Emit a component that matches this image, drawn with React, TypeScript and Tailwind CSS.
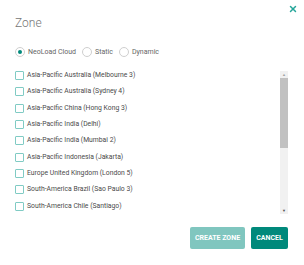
import { X } from 'lucide-react';

const zones = [
  'Asia-Pacific Australia (Melbourne 3)',
  'Asia-Pacific Australia (Sydney 4)',
  'Asia-Pacific China (Hong Kong 3)',
  'Asia-Pacific India (Delhi)',
  'Asia-Pacific India (Mumbai 2)',
  'Asia-Pacific Indonesia (Jakarta)',
  'Europe United Kingdom (London 5)',
  'South-America Brazil (Sao Paulo 3)',
  'South-America Chile (Santiago)',
];

function Radio({ label, checked }: { label: string; checked?: boolean }) {
  return (
    <label className="flex items-center gap-[3px]">
      <span className="flex h-[10px] w-[10px] items-center justify-center rounded-full border border-[#cfcfcf]">
        {checked && <span className="h-[4px] w-[4px] rounded-full bg-[#00897b]" />}
      </span>
      <span>{label}</span>
    </label>
  );
}

export default function App() {
  return (
    <div
      className="relative h-[265px] w-[304px] bg-white text-[#555]"
      style={{ fontFamily: 'Roboto, "Liberation Sans", sans-serif' }}
    >
      <button className="absolute right-[6px] top-[3.5px] text-[#26a69a]">
        <X size={10} strokeWidth={3.5} />
      </button>

      <div className="flex h-full flex-col pl-[15px] pr-[16px] pt-[15px]">
        <h2 className="h-[16px] text-[12px] font-light leading-[16px] text-[#757575]">Zone</h2>

        <div className="mt-[16px] flex h-[10px] items-center gap-[6px] text-[7px] leading-[10px] text-[#666]">
          <Radio label="NeoLoad Cloud" checked />
          <Radio label="Static" />
          <Radio label="Dynamic" />
        </div>

        <div className="mt-[10px] flex h-[147px] items-start">
          <ul className="h-full flex-1 overflow-hidden text-[6.8px] text-[#4a4a4a]">
            {zones.map((z, i) => (
              <li
                key={z}
                className={`flex gap-[3px] ${i % 3 === 1 ? 'h-[17px]' : 'h-[16px]'}`}
              >
                <span className="mt-[4px] h-[9px] w-[9px] shrink-0 rounded-[1px] border border-[#80cbc4]" />
                <span className="self-center">{z}</span>
              </li>
            ))}
          </ul>
          <div className="mt-[4px] flex h-[143px] w-[8px] flex-col bg-[#f1f1f1]">
            <div className="flex h-[7px] items-center justify-center text-[4px] text-[#a3a3a3]">▲</div>
            <div className="h-[70px] bg-[#c1c1c1]" />
            <div className="flex-1" />
            <div className="flex h-[7px] items-center justify-center text-[4px] text-[#505050]">▼</div>
          </div>
        </div>

        <div className="mt-[13px] flex justify-end gap-[6px]">
          <button className="h-[22px] w-[55px] rounded-[2px] bg-[#80c6bf] text-[7px] font-bold uppercase text-white">
            Create Zone
          </button>
          <button className="h-[22px] w-[37px] rounded-[2px] bg-[#00897b] text-[7px] font-bold uppercase text-white">
            Cancel
          </button>
        </div>
      </div>
    </div>
  );
}
